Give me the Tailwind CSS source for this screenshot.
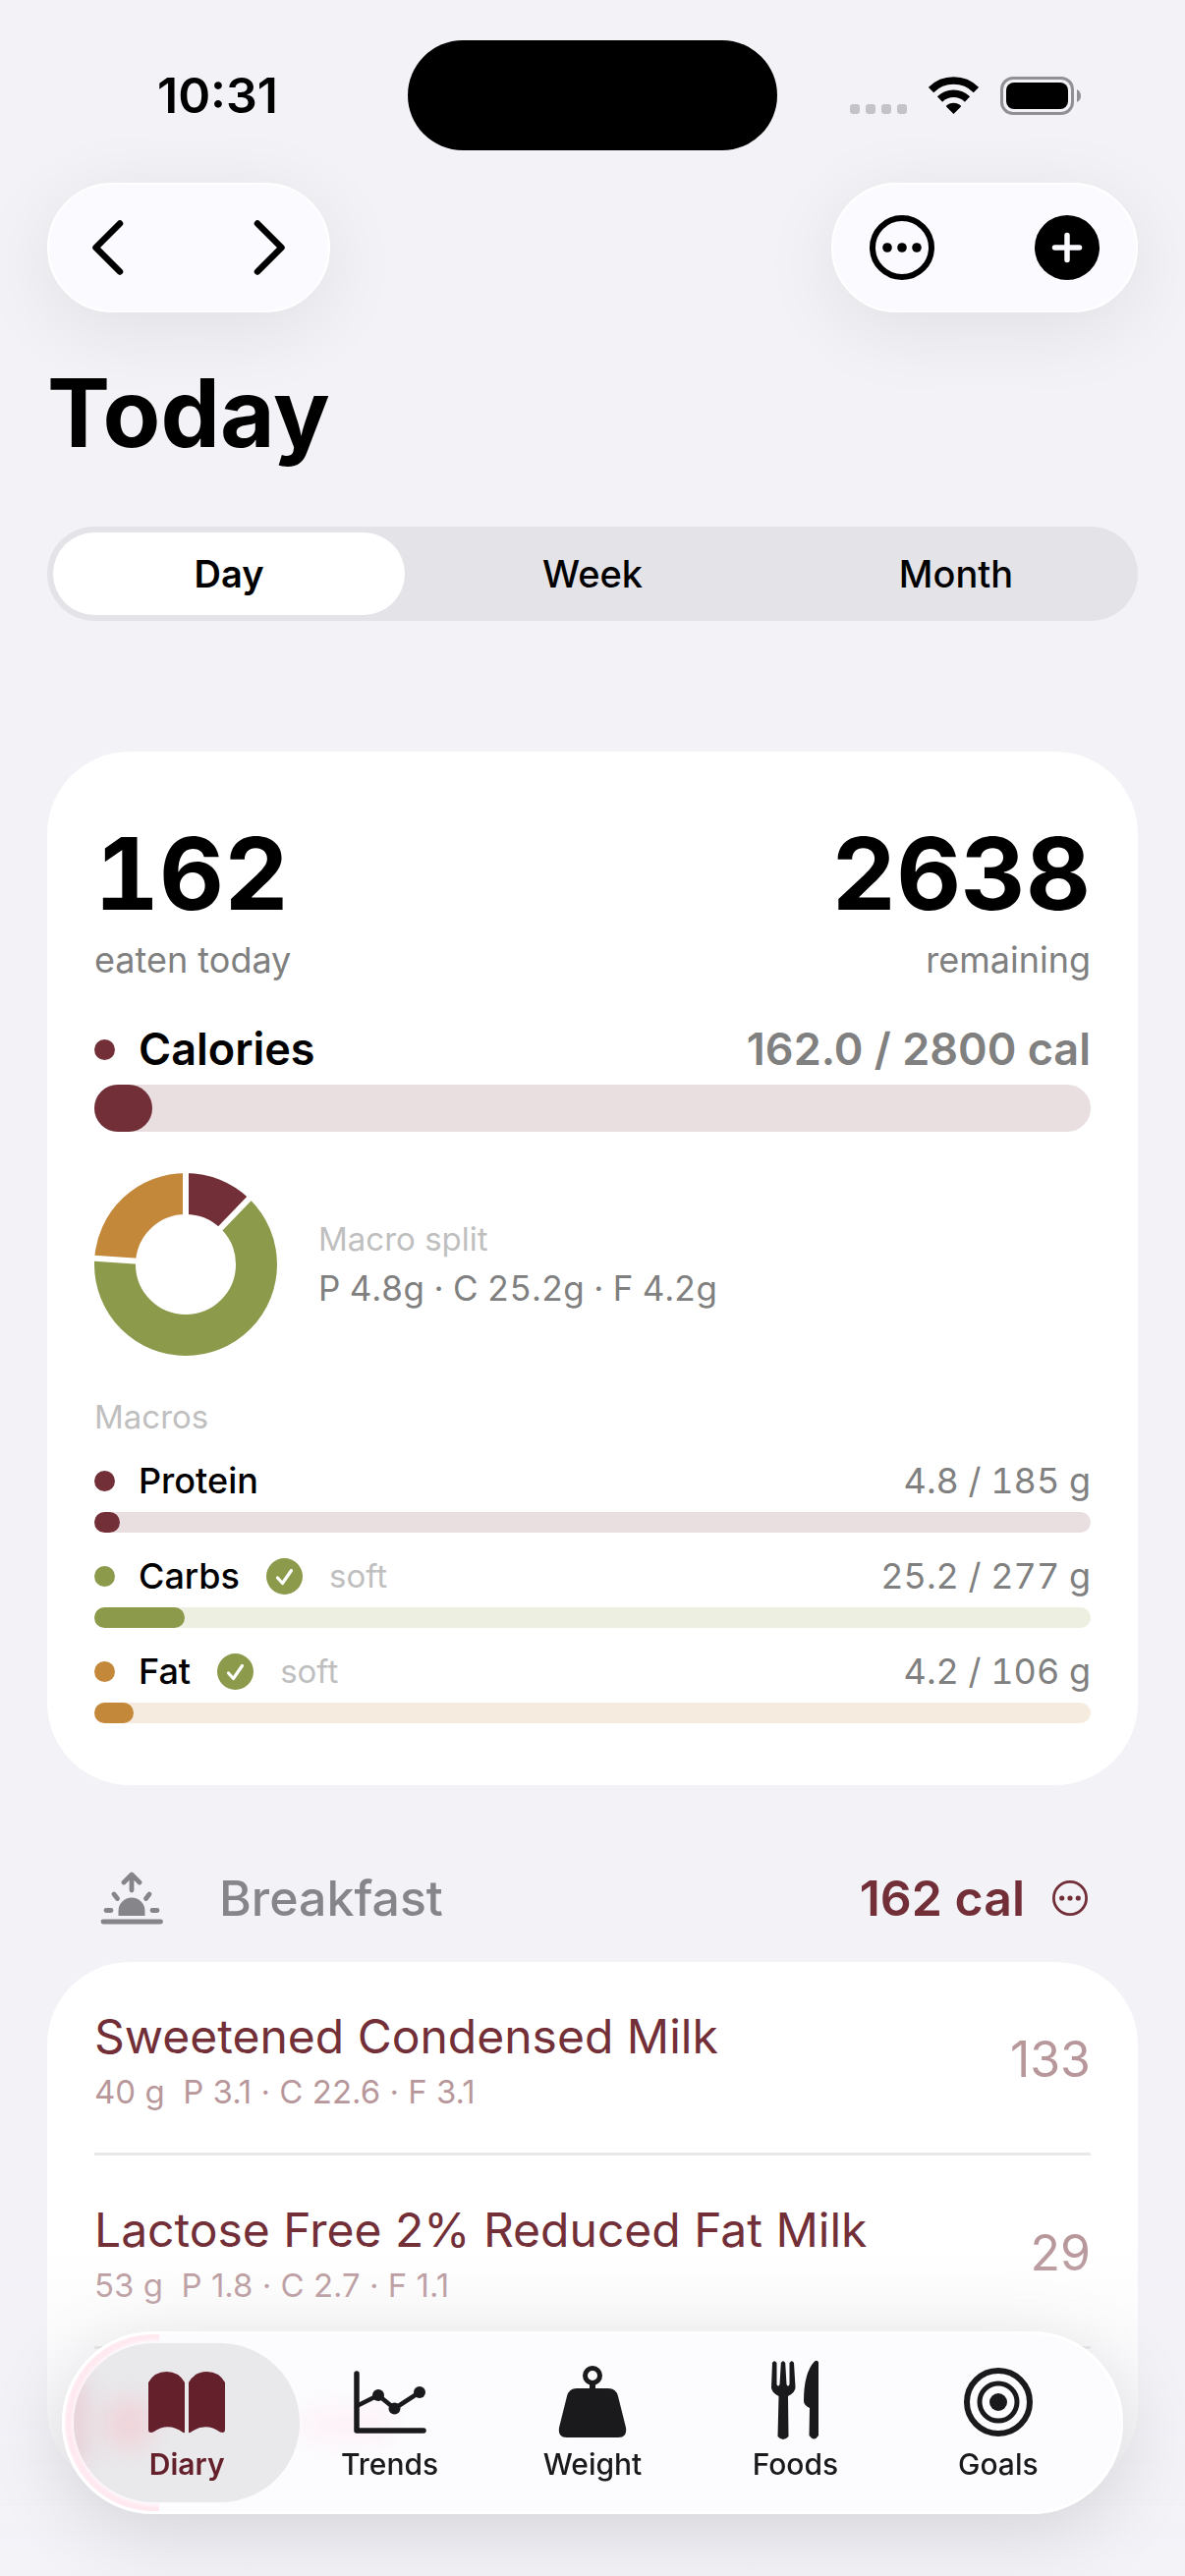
<!DOCTYPE html>
<html lang="en">
<head>
  <meta charset="UTF-8">
  <meta name="viewport" content="width=device-width, initial-scale=1">
  <title>Food Diary</title>
  <script src="https://cdn.jsdelivr.net/npm/@tailwindcss/browser@4"></script>
</head>
<body class="min-h-screen overflow-x-hidden bg-[#f2f2f7] font-['Inter','Liberation_Sans',sans-serif] text-black">

  <!-- Status bar -->
  <div class="grid h-[186px] grid-cols-[1fr_376px_1fr] pt-[41px]">
    <div class="flex h-28 items-center justify-center pl-7 text-[50px] font-semibold leading-[60px]">10:31</div>
    <div class="h-28 rounded-full bg-black"></div>
    <div class="flex h-28 items-center justify-center gap-[22px] pr-8">
      <svg class="h-[38px] w-[58px]" viewBox="0 0 58 38" fill="#c4c3c8">
        <rect x="0" y="28" width="10" height="10" rx="3"/>
        <rect x="16" y="28" width="10" height="10" rx="3"/>
        <rect x="32" y="28" width="10" height="10" rx="3"/>
        <rect x="48" y="28" width="10" height="10" rx="3"/>
      </svg>
      <svg class="h-[38px] w-[51px]" viewBox="0 0 51 38">
        <g fill="none" stroke="#000" stroke-width="7.5">
          <path d="M2.600 13.500A32.500 32.500 0 0 1 48.400 13.500"/>
          <path d="M11.500 23A20 20 0 0 1 39.500 23"/>
        </g>
        <path d="M25.500 38L18 30.500Q18 29.500 19 28.800A11 11 0 0 1 32 28.800Q33 29.500 33 30.500Z"/>
      </svg>
      <svg class="h-[39px] w-[83px]" viewBox="0 0 83 39">
        <rect x="1.500" y="1.500" width="72" height="36" rx="11.500" fill="none" stroke="#919094" stroke-width="3"/>
        <rect x="6" y="6" width="63" height="27" rx="8"/>
        <path d="M78 13Q82 15 82 19.500T78 26Z" fill="#919094"/>
      </svg>
    </div>
  </div>

  <main class="px-12">
    <!-- Toolbar -->
    <div class="flex justify-between">
      <div class="flex h-[132px] w-72 items-center justify-between rounded-full border-2 border-white bg-[#fafaff] px-7 shadow-[0_16px_80px_rgba(0,0,0,0.08)]">
        <button class="flex size-16 items-center justify-center" aria-label="Previous day">
          <svg class="h-[58px] w-9" viewBox="0 0 36 58" fill="none" stroke="#000" stroke-width="6.5" stroke-linecap="round" stroke-linejoin="round"><path d="M30 4.500L5.500 29L30 53.500"/></svg>
        </button>
        <button class="flex size-16 items-center justify-center" aria-label="Next day">
          <svg class="h-[58px] w-9" viewBox="0 0 36 58" fill="none" stroke="#000" stroke-width="6.5" stroke-linecap="round" stroke-linejoin="round"><path d="M6 4.500L30.500 29L6 53.500"/></svg>
        </button>
      </div>
      <div class="flex h-[132px] w-[312px] items-center justify-between rounded-full border-2 border-white bg-[#fafaff] px-9 shadow-[0_16px_80px_rgba(0,0,0,0.08)]">
        <button class="flex size-[68px] items-center justify-center" aria-label="More">
          <svg class="size-[66px]" viewBox="0 0 66 66">
            <circle cx="33" cy="33" r="30" fill="none" stroke="#000" stroke-width="6"/>
            <circle cx="18" cy="33" r="4.800"/><circle cx="33" cy="33" r="4.800"/><circle cx="48" cy="33" r="4.800"/>
          </svg>
        </button>
        <button class="flex size-[68px] items-center justify-center" aria-label="Add">
          <svg class="size-[66px]" viewBox="0 0 66 66">
            <circle cx="33" cy="33" r="33"/>
            <path d="M33 20.500V45.500M20.500 33H45.500" stroke="#fafaff" stroke-width="5.500" stroke-linecap="round"/>
          </svg>
        </button>
      </div>
    </div>

    <h1 class="mt-[42px] text-8xl font-bold leading-[120px]">Today</h1>

    <!-- Range switch -->
    <div class="mt-14 grid h-24 grid-cols-3 gap-3 rounded-full bg-[#e4e3e8] p-1.5 text-[38px] font-medium" role="tablist">
      <button class="rounded-full bg-white font-semibold" role="tab" aria-selected="true">Day</button>
      <button role="tab" aria-selected="false">Week</button>
      <button role="tab" aria-selected="false">Month</button>
    </div>

    <!-- Summary card -->
    <section class="mt-[133px] rounded-[84px] bg-white px-12 pt-16 pb-[63px]">
      <div class="flex justify-between text-4xl text-[#808080]">
        <div>
          <p class="text-[102px] font-bold leading-[120px] tabular-nums text-black">162</p>
          <p class="mt-1.5 leading-[44px]">eaten today</p>
        </div>
        <div class="text-right">
          <p class="text-[102px] font-bold leading-[120px] tabular-nums text-black">2638</p>
          <p class="mt-1.5 leading-[44px]">remaining</p>
        </div>
      </div>

      <div class="mt-[41px] flex items-center text-[45px] font-semibold leading-[56px]">
        <span class="mr-6 size-[21px] rounded-full bg-[#722f37]"></span>
        <span>Calories</span>
        <span class="ml-auto text-[#808080]">162.0 / 2800 cal</span>
      </div>
      <div class="mt-2 h-12 rounded-full bg-[#e9dfe0]">
        <div class="h-full rounded-full bg-[#722f37]" style="width: 5.8%"></div>
      </div>

      <div class="mt-[42px] flex items-center gap-[42px]">
        <svg class="size-[186px]" viewBox="-93 -93 186 186" role="img" aria-label="Macro split chart">
          <!-- shares by calories: protein 12.2%, carbs 63.9%, fat 23.9% -->
          <g fill="none" stroke-width="42" transform="rotate(-90)">
            <circle r="72" stroke="#722f37" pathLength="100" stroke-dasharray="12.200 87.800"/>
            <circle r="72" stroke="#8b9a4b" pathLength="100" stroke-dasharray="63.900 36.100" stroke-dashoffset="-12.200"/>
            <circle r="72" stroke="#c4883a" pathLength="100" stroke-dasharray="23.900 76.100" stroke-dashoffset="-76.100"/>
          </g>
          <g stroke="#fff" stroke-width="6">
            <path d="M0 0V-96"/>
            <path d="M0 0V-96" transform="rotate(43.900)"/>
            <path d="M0 0V-96" transform="rotate(273.900)"/>
          </g>
        </svg>
        <div>
          <p class="text-[33px] leading-10 text-[#bfbfbf]">Macro split</p>
          <p class="mt-2 text-[35px] leading-[44px] tabular-nums text-[#808080]">P 4.8g · C 25.2g · F 4.2g</p>
        </div>
      </div>

      <h2 class="mt-[42px] text-[33px] leading-10 text-[#bfbfbf]">Macros</h2>

      <div class="mt-[23px] flex h-11 items-center text-4xl">
        <span class="mr-6 size-[21px] rounded-full bg-[#722f37]"></span>
        <span class="font-medium">Protein</span>
        <span class="ml-auto tabular-nums text-[#808080]">4.8 / 185 g</span>
      </div>
      <div class="mt-2.5 h-[21px] rounded-full bg-[#e9dfe0]">
        <div class="h-full rounded-full bg-[#722f37]" style="width: 2.6%"></div>
      </div>

      <div class="mt-[22px] flex h-11 items-center text-4xl">
        <span class="mr-6 size-[21px] rounded-full bg-[#8b9a4b]"></span>
        <span class="font-medium">Carbs</span>
        <svg class="mx-[27px] size-[37px]" viewBox="0 0 37 37"><circle cx="18.500" cy="18.500" r="18.500" fill="#8b9a4b"/><path d="M11.500 20L16.500 25.500L25.500 12.500" fill="none" stroke="#fff" stroke-width="3.200" stroke-linecap="round" stroke-linejoin="round"/></svg>
        <span class="text-[33px] text-[#bfbfbf]">soft</span>
        <span class="ml-auto tabular-nums text-[#808080]">25.2 / 277 g</span>
      </div>
      <div class="mt-2.5 h-[21px] rounded-full bg-[#edefe1]">
        <div class="h-full rounded-full bg-[#8b9a4b]" style="width: 9.1%"></div>
      </div>

      <div class="mt-[22px] flex h-11 items-center text-4xl">
        <span class="mr-6 size-[21px] rounded-full bg-[#c4883a]"></span>
        <span class="font-medium">Fat</span>
        <svg class="mx-[27px] size-[37px]" viewBox="0 0 37 37"><circle cx="18.500" cy="18.500" r="18.500" fill="#8b9a4b"/><path d="M11.500 20L16.500 25.500L25.500 12.500" fill="none" stroke="#fff" stroke-width="3.200" stroke-linecap="round" stroke-linejoin="round"/></svg>
        <span class="text-[33px] text-[#bfbfbf]">soft</span>
        <span class="ml-auto tabular-nums text-[#808080]">4.2 / 106 g</span>
      </div>
      <div class="mt-2.5 h-[21px] rounded-full bg-[#f5ecdf]">
        <div class="h-full rounded-full bg-[#c4883a]" style="width: 3.9%"></div>
      </div>
    </section>

    <!-- Breakfast -->
    <div class="mt-[85px] mb-[35px] flex items-center px-[51px] text-[50px] leading-[60px]">
      <svg class="mr-[54px] h-[54px] w-[70px]" viewBox="0 0 70 54" fill="none" stroke="#86858a" stroke-width="4.800" stroke-linecap="round" stroke-linejoin="round">
        <path d="M6 51H64.500"/>
        <path d="M35 19V3.500M27 11L35 3L43 11"/>
        <path d="M17 23L20.500 27.500M53 23L49.500 27.500M9 39.500H14M56 39.500H61"/>
        <path d="M21.500 45V40A13.500 13.500 0 0 1 48.500 40V45Z" fill="#86858a" stroke="none"/>
      </svg>
      <h2 class="font-medium text-[#86858a]">Breakfast</h2>
      <span class="ml-auto font-semibold text-[#722f37]">162 cal</span>
      <button class="ml-7" aria-label="Breakfast options">
        <svg class="size-9" viewBox="0 0 36 36" fill="#722f37">
          <circle cx="18" cy="18" r="16.600" fill="none" stroke="#722f37" stroke-width="2.800"/>
          <circle cx="9.700" cy="18" r="2.600"/><circle cx="18" cy="18" r="2.600"/><circle cx="26.300" cy="18" r="2.600"/>
        </svg>
      </button>
    </div>

    <ul class="rounded-[84px] bg-white px-12 pb-36 text-[#722f37]">
      <li class="flex items-center justify-between border-b-3 border-[#e8e8e8] pt-[46px] pb-[42px]">
        <div>
          <p class="text-5xl leading-[60px]">Sweetened Condensed Milk</p>
          <p class="mt-1.5 whitespace-pre text-[33px] leading-10 text-[#722f37]/50">40 g  P 3.1 · C 22.6 · F 3.1</p>
        </div>
        <span class="text-[50px] leading-[60px] text-[#722f37]/50">133</span>
      </li>
      <li class="flex items-center justify-between border-b-3 border-[#e8e8e8] pt-[46px] pb-[42px]">
        <div>
          <p class="text-5xl leading-[60px]">Lactose Free 2% Reduced Fat Milk</p>
          <p class="mt-1.5 whitespace-pre text-[33px] leading-10 text-[#722f37]/50">53 g  P 1.8 · C 2.7 · F 1.1</p>
        </div>
        <span class="text-[50px] leading-[60px] text-[#722f37]/50">29</span>
      </li>
    </ul>
  </main>

  <!-- Fade behind the tab bar -->
  <div class="pointer-events-none fixed inset-x-0 bottom-0 h-[340px] bg-linear-to-b from-[#f2f2f7]/0 to-[#f2f2f7]"></div>

  <!-- Tab bar -->
  <nav class="fixed inset-x-[63px] bottom-[63px] h-[186px] rounded-full bg-[#fcfcff] shadow-[0_16px_80px_rgba(0,0,0,0.13)]">
    <!-- tint of the row that lies under the glass -->
    <div class="absolute inset-0 overflow-hidden rounded-full border-3 border-white" aria-hidden="true">
      <div class="absolute -inset-y-0.5 left-0 w-24 overflow-hidden">
        <div class="h-full w-[600px] rounded-full border-8 border-[#ffe7ee] blur-[2px]"></div>
      </div>
      <div class="absolute top-[74px] left-[240px] h-9 w-24 rounded-full bg-[#ffe3ea]/40 blur-md"></div>
    </div>
    <div class="relative flex h-full items-center px-6 text-[30px] font-medium leading-9 text-[#1a1a1c]">
      <a href="#diary" class="relative -mx-3 flex h-[162px] flex-1 flex-col items-center overflow-hidden rounded-full bg-[#e9e9ec] pt-[25px] font-semibold text-[#65212b]" aria-current="page">
        <span class="absolute top-[54px] left-7 size-14 rounded-full bg-[#f3c9d1]/60 blur-md"></span>
        <span class="absolute top-8 -left-3 h-24 w-6 rounded-full bg-[#e9b9c4]/60 blur-md"></span>
        <svg class="relative h-[74px] w-20" viewBox="0 0 80 74" fill="#65212b">
          <path d="M1 15Q7 4 19.500 4T38 15V65.500Q38 66.500 36.500 66Q21 55 6 65.500Q1 67 1 63Z"/>
          <path d="M42 15Q48 4 60.500 4T79 15V63Q79 67 74 65.500Q59 55 43.500 66Q42 66.500 42 65.500Z"/>
        </svg>
        <span class="relative mt-1.5">Diary</span>
      </a>
      <a href="#trends" class="-mx-3 flex h-[162px] flex-1 flex-col items-center pt-[25px]">
        <svg class="h-[74px] w-20" viewBox="0 0 80 74" fill="none" stroke="#1a1a1c" stroke-linecap="round" stroke-linejoin="round">
          <path d="M6 6V64H74" stroke-width="5.500"/>
          <path d="M8 38L28 28L44.500 41.500L70 25" stroke-width="4.500"/>
          <g fill="#1a1a1c" stroke="none"><circle cx="28" cy="28" r="6"/><circle cx="44.500" cy="41.500" r="6"/><circle cx="70" cy="25" r="6"/></g>
        </svg>
        <span class="mt-1.5">Trends</span>
      </a>
      <a href="#weight" class="-mx-3 flex h-[162px] flex-1 flex-col items-center pt-[25px]">
        <svg class="h-[74px] w-20 overflow-visible" viewBox="0 0 80 74" fill="#1a1a1c">
          <circle cx="40" cy="8" r="7.500" fill="none" stroke="#1a1a1c" stroke-width="5"/>
          <path d="M37 15H43V21H56Q64 21 66 29L74 61Q75.500 71 66 71H14Q4.500 71 6 61L14 29Q16 21 24 21H37Z"/>
        </svg>
        <span class="mt-1.5">Weight</span>
      </a>
      <a href="#foods" class="-mx-3 flex h-[162px] flex-1 flex-col items-center pt-[17px]">
        <svg class="h-[82px] w-20" viewBox="0 0 80 82" fill="#1a1a1c">
          <path d="M17 3Q19 -.5 21.500 3V25Q23 28 24.500 25L25.800 3Q28 -.5 30.200 3L31.500 25Q33 28 34.500 25V3Q37 -.5 39 3L40.500 28Q40.500 33 33 37L33.500 78Q28 84 22.500 78L23.500 37Q16 33 16 28Z"/>
          <path d="M64 2.500V77Q59.500 84 54.500 77L55 49Q49 46 49 42Q49 13 60 1.500Q63 -.5 64 2.500Z"/>
        </svg>
        <span class="mt-1.5">Foods</span>
      </a>
      <a href="#goals" class="-mx-3 flex h-[162px] flex-1 flex-col items-center pt-[25px]">
        <svg class="h-[74px] w-20" viewBox="0 0 80 74">
          <g fill="none" stroke="#1a1a1c">
            <circle cx="40" cy="35" r="32" stroke-width="6"/>
            <circle cx="40" cy="35" r="19" stroke-width="5"/>
          </g>
          <circle cx="40" cy="35" r="9" fill="#1a1a1c"/>
        </svg>
        <span class="mt-1.5">Goals</span>
      </a>
    </div>
  </nav>

  <script>
    // Range switch
    const tabs = document.querySelectorAll('[role="tab"]');
    tabs.forEach(tab => {
      tab.addEventListener('click', () => {
        tabs.forEach(t => {
          const on = t === tab;
          t.setAttribute('aria-selected', on);
          ['rounded-full', 'bg-white', 'font-semibold'].forEach(c => t.classList.toggle(c, on));
        });
      });
    });
  </script>
</body>
</html>
